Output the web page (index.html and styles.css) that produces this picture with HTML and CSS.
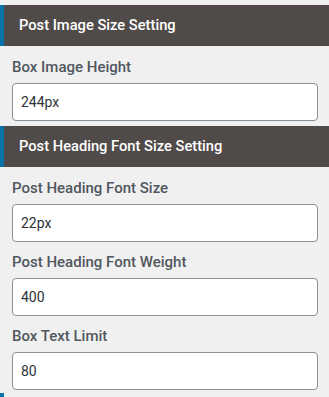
FILE: index.html
```html
<!DOCTYPE html>
<html>
<head>
<meta charset="utf-8">
<link rel="stylesheet" href="styles.css">
</head>
<body>
<div class="panel">
  <section class="group">
    <h3 class="group-title">Post Image Size Setting</h3>
    <div class="group-body">
      <div class="field">
        <label class="field-label">Box Image Height</label>
        <input class="field-input" type="text" value="244px">
      </div>
    </div>
  </section>
  <section class="group">
    <h3 class="group-title">Post Heading Font Size Setting</h3>
    <div class="group-body">
      <div class="field">
        <label class="field-label">Post Heading Font Size</label>
        <input class="field-input" type="text" value="22px">
      </div>
      <div class="field">
        <label class="field-label">Post Heading Font Weight</label>
        <input class="field-input" type="text" value="400">
      </div>
      <div class="field">
        <label class="field-label">Box Text Limit</label>
        <input class="field-input" type="text" value="80">
      </div>
    </div>
  </section>
  <div class="group-next"></div>
</div>
</body>
</html>
```

FILE: styles.css
```css
html, body {
  margin: 0;
  padding: 0;
  background: #f0f0f1;
}
body {
  font-family: Roboto, "Liberation Sans", sans-serif;
}
.panel {
  padding-top: 5px;
  display: flex;
  flex-direction: column;
}
.group {
  display: flex;
  flex-direction: column;
  margin-bottom: 5px;
}
.group-title {
  margin: 0;
  height: 41px;
  box-sizing: border-box;
  background: #504b49;
  border-left: 4px solid #0a73aa;
  color: #ffffff;
  font-size: 14.7px;
  font-weight: 500;
  line-height: 41px;
  padding-left: 15px;
}
.group-body {
  padding-top: 1px;
  display: flex;
  flex-direction: column;
}
.field {
  display: flex;
  flex-direction: column;
}
.field-label {
  display: block;
  height: 36px;
  box-sizing: border-box;
  padding: 11px 0 0 12px;
  font-size: 15px;
  font-weight: 500;
  line-height: 18px;
  color: #50575e;
}
.field-input {
  margin: 0 11px 0 12px;
  height: 38px;
  box-sizing: border-box;
  border: 1px solid #8c8f94;
  border-radius: 4px;
  background: #ffffff;
  padding: 0 8px;
  font-family: Roboto, "Liberation Sans", sans-serif;
  font-size: 14px;
  color: #2c3338;
  outline: none;
}
.group-next {
  margin-top: -2px;
  height: 4px;
  width: 4px;
  background: #0a73aa;
}
```
